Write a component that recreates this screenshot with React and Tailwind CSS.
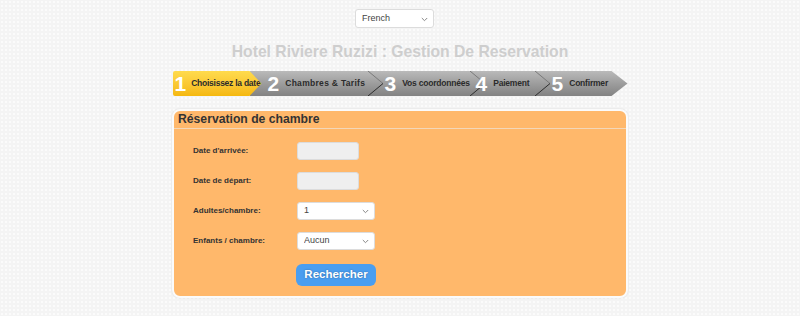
import React from 'react';

const font = { fontFamily: '"Liberation Sans", Arial, sans-serif' };

function Chevron() {
  return (
    <svg width="15" height="25" viewBox="0 0 15 25" className="shrink-0">
      <path d="M0 0 L15 12.5" stroke="#7a7a7a" strokeWidth="1" fill="none" />
      <path d="M15 12.5 L0 25" stroke="#2e2e2e" strokeWidth="1" fill="none" />
    </svg>
  );
}

function Caret() {
  return (
    <svg width="7" height="5" viewBox="0 0 7 5" className="absolute right-[6px] top-[calc(50%-2px)] pointer-events-none">
      <path d="M0.8 1 L3.5 3.7 L6.2 1" stroke="#888" strokeWidth="1" fill="none" />
    </svg>
  );
}

function Select({ value, className, textClass }) {
  return (
    <div className={`relative ${className}`}>
      <select
        className={`block appearance-none w-full h-full bg-white border border-[#dcdcdc] rounded-[3px] text-[#444] ${textClass}`}
        defaultValue={value}
      >
        <option>{value}</option>
      </select>
      <Caret />
    </div>
  );
}

function Step({ num, label, width, last, tracking }) {
  return (
    <div className={`flex items-center h-full shrink-0 ${last ? 'flex-1' : ''}`} style={width ? { width } : undefined}>
      <span className="text-[21px] font-bold text-white leading-none">{num}</span>
      <span className={`ml-[6px] text-[8.5px] font-bold text-[#2b2b2b] whitespace-nowrap ${tracking}`}>{label}</span>
      {!last && <div className="ml-auto mr-[2px] -ml-[20px]"><Chevron /></div>}
    </div>
  );
}

export default function App() {
  return (
    <div
      className="min-h-screen w-full bg-[#f4f4f4] bg-[radial-gradient(#fbfbfb_1px,transparent_1px)] bg-[size:4px_4px] flex flex-col items-center"
      style={font}
    >
      <div className="mt-[9px] mr-[11px] flex">
        <Select value="French" className="w-[79px] h-[19px]" textClass="text-[9px] pl-[6px] rounded-[2px]" />
      </div>

      <h1 className="mt-[13px] text-[15.7px] font-bold text-[#cecece] leading-[22px]">
        Hotel Riviere Ruzizi : Gestion De Reservation
      </h1>

      <div className="mt-[8px] flex h-[25px] w-[455px]">
        <div
          className="relative z-10 flex items-center w-[89px] h-full shrink-0 pl-[2px] rounded-l-[2px] bg-gradient-to-b from-[#ffdb4d] to-[#f5b80c]"
          style={{ clipPath: 'polygon(0 0, 77px 0, 89px 50%, 77px 100%, 0 100%)' }}
        >
          <span className="text-[21px] font-bold text-white leading-none">1</span>
          <span className="ml-[5px] text-[8.5px] font-bold text-[#2b2b2b] whitespace-nowrap tracking-[-0.25px]">Choisissez la date</span>
        </div>
        <div
          className="-ml-[12px] flex-1 flex h-full pl-[18px] bg-gradient-to-b from-[#bababa] via-[#9d9d9d] to-[#838383]"
          style={{ clipPath: 'polygon(0 0, calc(100% - 16px) 0, 100% 50%, calc(100% - 16px) 100%, 0 100%)' }}
        >
          <Step num="2" label="Chambres & Tarifs" width="117px" tracking="tracking-[0.3px]" />
          <Step num="3" label="Vos coordonnées" width="91px" tracking="tracking-[-0.2px]" />
          <Step num="4" label="Paiement" width="76px" tracking="tracking-[-0.2px]" />
          <Step num="5" label="Confirmer" last tracking="tracking-[-0.2px]" />
        </div>
      </div>

      <div className="mt-[13px] w-[456px] rounded-[8px] border-2 border-[#fbfbfb] bg-[#ffb86b] shadow-[0_0_2px_rgba(0,0,0,0.12)] pb-[10px]">
        <div className="pl-[4px] h-[18px] border-b border-[#f3d7b9] flex items-center">
          <h2 className="text-[12.2px] font-bold text-[#333] leading-[17px]">Réservation de chambre</h2>
        </div>
        <div className="pl-[19px] pt-[13px] flex flex-col gap-[12px]">
          {[
            { label: "Date d'arrivée:", type: 'input' },
            { label: 'Date de départ:', type: 'input' },
            { label: 'Adultes/chambre:', type: 'select', value: '1' },
            { label: 'Enfants / chambre:', type: 'select', value: 'Aucun' },
          ].map((r) => (
            <div key={r.label} className="flex items-center h-[18px]">
              <label className="w-[104px] text-[8px] font-bold text-[#333]">{r.label}</label>
              {r.type === 'input' ? (
                <input className="block w-[62px] h-[18px] bg-[#efefef] border border-[#dcdcdc] rounded-[3px]" />
              ) : (
                <Select value={r.value} className="w-[78px] h-[18px]" textClass="text-[9px] pl-[6px]" />
              )}
            </div>
          ))}
          <div className="flex pl-[103px] mt-[2px]">
            <button className="w-[80px] h-[22px] rounded-[6px] bg-[#4a9ef0] text-white text-[11.5px] font-bold [text-shadow:0_0_2px_rgba(0,0,0,0.35)]">
              Rechercher
            </button>
          </div>
        </div>
      </div>
    </div>
  );
}
